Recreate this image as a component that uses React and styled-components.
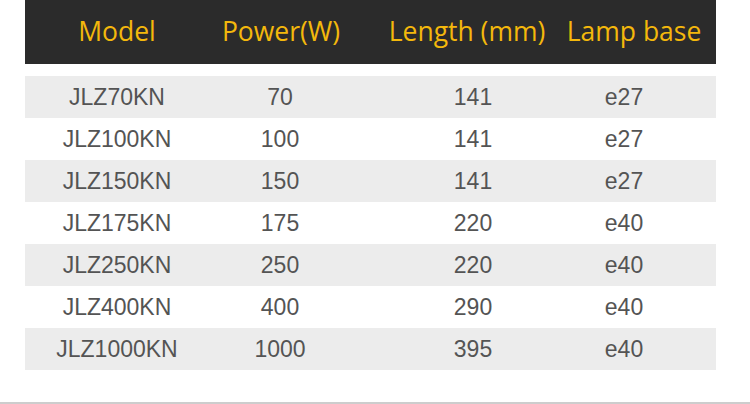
import styled, { createGlobalStyle } from "styled-components";

const rows = [
  ["JLZ70KN", "70", "141", "e27"],
  ["JLZ100KN", "100", "141", "e27"],
  ["JLZ150KN", "150", "141", "e27"],
  ["JLZ175KN", "175", "220", "e40"],
  ["JLZ250KN", "250", "220", "e40"],
  ["JLZ400KN", "400", "290", "e40"],
  ["JLZ1000KN", "1000", "395", "e40"],
];

const headers = ["Model", "Power(W)", "Length (mm)", "Lamp base"];

export default function App() {
  return (
    <>
      <GlobalStyle />
      <Page>
        <Table>
          <HeaderRow>
            {headers.map((h) => (
              <HeadCell key={h}>{h}</HeadCell>
            ))}
          </HeaderRow>
          <Body>
            {rows.map((row, idx) => (
              <Row key={idx} $shaded={idx % 2 === 0}>
                {row.map((cell, i) => (
                  <Cell key={i}>{cell}</Cell>
                ))}
              </Row>
            ))}
          </Body>
        </Table>
        <BottomLine />
      </Page>
    </>
  );
}

const GlobalStyle = createGlobalStyle`
  html, body {
    margin: 0;
    padding: 0;
    background: #fff;
  }
`;

const Page = styled.div`
  width: 750px;
  height: 404px;
  display: flex;
  flex-direction: column;
  justify-content: space-between;
  overflow: hidden;
`;

const Table = styled.div`
  width: 691px;
  margin-left: 25px;
  display: flex;
  flex-direction: column;
  gap: 12px;
`;

const HeaderRow = styled.div`
  height: 64px;
  background: #2b2b2b;
  display: grid;
  grid-template-columns: 184px 144px 228px 106px;
  align-items: center;
`;

const HeadCell = styled.div`
  display: flex;
  justify-content: center;
  white-space: nowrap;
  color: #f4b80c;
  font-family: "Open Sans", "Noto Sans", sans-serif;
  font-weight: 500;
  font-size: 26.5px;
  line-height: 1;
  padding-bottom: 2px;
`;

const Body = styled.div`
  display: flex;
  flex-direction: column;
`;

const Row = styled.div`
  height: 42px;
  background: ${(p) => (p.$shaded ? "#ececec" : "#ffffff")};
  display: grid;
  grid-template-columns: 184px 142px 244px 58px;
  align-items: center;
`;

const Cell = styled.div`
  display: flex;
  justify-content: center;
  white-space: nowrap;
  color: #545454;
  font-family: "Liberation Sans", Arial, sans-serif;
  font-size: 23px;
  line-height: 1;
`;

const BottomLine = styled.div`
  height: 2px;
  background: #cdcdcd;
`;
